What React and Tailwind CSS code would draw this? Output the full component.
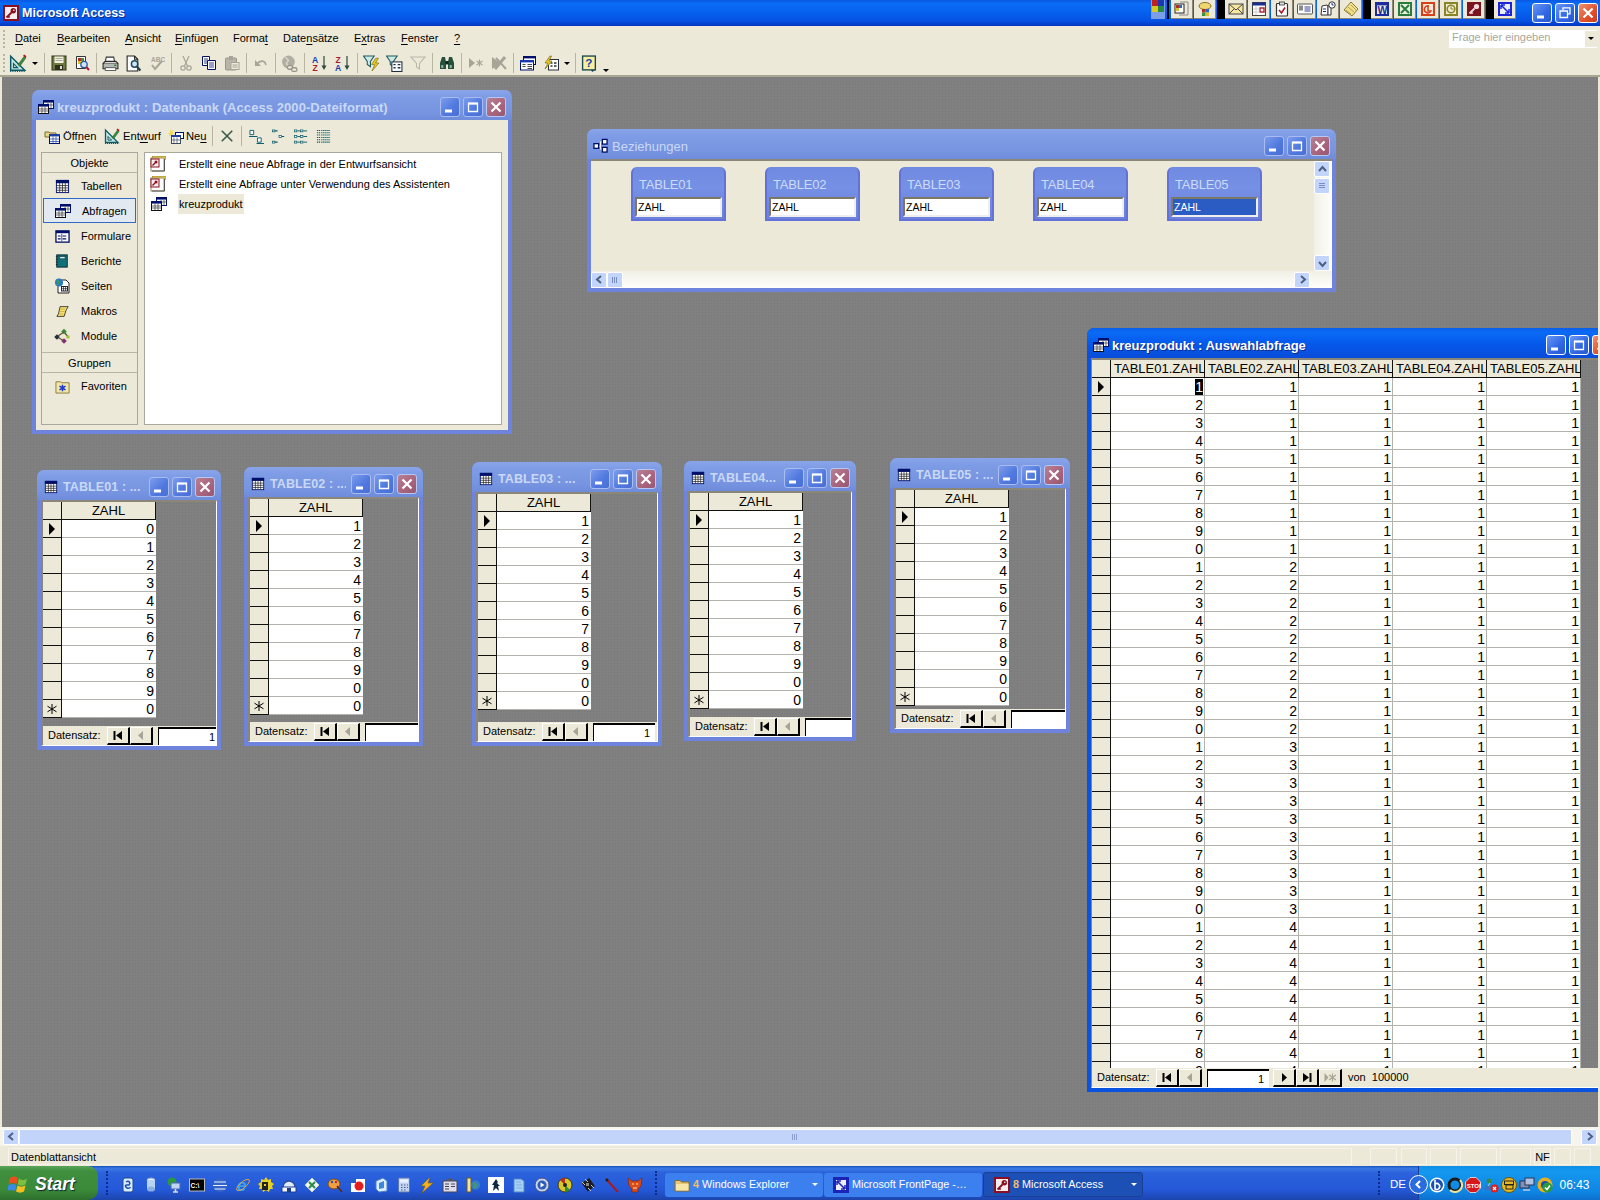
import React from "react";

const S = ({ s = 16, children, className = "" }) => (
  <svg width={s} height={s} viewBox="0 0 16 16" className={`shrink-0 ${className}`} fontFamily="Liberation Sans, sans-serif">
    {children}
  </svg>
);

const I = {
  access: (s) => (
    <S s={s}>
      <rect x="1" y="1" width="14" height="14" fill="#f6eeee" stroke="#8a1020" strokeWidth="2" />
      <circle cx="10.3" cy="5.7" r="2.7" fill="#8a1020" />
      <circle cx="10.8" cy="5.2" r="0.8" fill="#fff" />
      <path d="M8.5 7.5L3.5 12.5M5 11l1.6 1.6" stroke="#8a1020" strokeWidth="1.8" fill="none" />
    </S>
  ),
  table: (s) => (
    <S s={s}>
      <rect x="1.5" y="1.5" width="13" height="13" fill="#fff" stroke="#00106a" />
      <rect x="1" y="1" width="14" height="3.5" fill="#00106a" />
      <path d="M5 4v10M8 4v10M11 4v10M2 7h12M2 9.5h12M2 12h12" stroke="#222" strokeWidth="0.8" />
    </S>
  ),
  query: (s) => (
    <S s={s}>
      <rect x="5.5" y="1.5" width="10" height="8" fill="#fff" stroke="#00106a" />
      <rect x="5" y="1" width="11" height="2.6" fill="#00106a" />
      <path d="M10 4v5M13 4v5M6 6h9" stroke="#333" strokeWidth="0.7" />
      <rect x="0.5" y="5.5" width="10" height="9" fill="#fff" stroke="#111" />
      <rect x="0" y="5" width="11" height="2.6" fill="#00106a" />
      <path d="M4 8v6M7 8v6M1 10h9M1 12h9" stroke="#333" strokeWidth="0.7" />
    </S>
  ),
  rel: (s) => (
    <S s={s}>
      <path d="M5 9h3V4h3M8 9v3h3" stroke="#fff" fill="none" />
      <rect x="1" y="6" width="5" height="5" fill="#fff" stroke="#00106a" strokeWidth="1.4" />
      <rect x="10" y="1.5" width="5" height="5" fill="#fff" stroke="#00106a" strokeWidth="1.4" />
      <rect x="10" y="10" width="5" height="5" fill="#fff" stroke="#00106a" strokeWidth="1.4" />
    </S>
  ),
  design: (s) => (
    <S s={s}>
      <path d="M1.5 2v12.5H14z" fill="#bfe5e5" stroke="#0d5a66" strokeWidth="1.3" />
      <path d="M4 8.5v3.6h3.6z" fill="#ece9d8" stroke="#0d5a66" />
      <path d="M1 15.5h14" stroke="#0d5a66" strokeWidth="1.2" strokeDasharray="1 1" />
      <path d="M8 9.5L13.5 2l1.6 1.4L9.5 11z" fill="#3c8c3c" stroke="#1c5a1c" strokeWidth="0.5" />
      <path d="M13 1l2 1.6" stroke="#b01818" strokeWidth="1.6" />
    </S>
  ),
  save: (s) => (
    <S s={s}>
      <rect x="1" y="1" width="14" height="14" fill="#6e7a3c" stroke="#30351a" />
      <rect x="3.5" y="1.5" width="9" height="6.5" fill="#f0efe0" />
      <path d="M4.5 3.5h7M4.5 5.5h7" stroke="#8a8a70" strokeWidth="0.7" />
      <rect x="4" y="10" width="8" height="5" fill="#2c3018" />
      <rect x="9" y="11" width="2" height="3" fill="#ddd" />
    </S>
  ),
  dbq: (s) => (
    <S s={s}>
      <path d="M2.5 1.5h9v12h-9z" fill="#fff" stroke="#333" />
      <rect x="4" y="3" width="3" height="3" fill="#b03020" />
      <rect x="7" y="3" width="3" height="3" fill="#3c9040" />
      <rect x="4" y="6" width="3" height="3" fill="#d8c030" />
      <circle cx="10" cy="9.5" r="3.2" fill="#cfe4f8" stroke="#2c5aa0" strokeWidth="1.3" />
      <path d="M12.3 12l2.7 3" stroke="#b01840" strokeWidth="2" />
    </S>
  ),
  print: (s) => (
    <S s={s}>
      <path d="M4 2h7l1 5H3z" fill="#fff" stroke="#333" />
      <path d="M1 8h14v5H1z" fill="#b4b8b4" stroke="#2a2a2a" />
      <path d="M1 8l2-2h10l2 2" fill="#d8d8d0" stroke="#2a2a2a" />
      <rect x="3" y="12" width="10" height="2.5" fill="#fff" stroke="#333" strokeWidth="0.7" />
      <rect x="11.5" y="9" width="2" height="1.4" fill="#2a7a2a" />
    </S>
  ),
  preview: (s) => (
    <S s={s}>
      <path d="M2 1h7l3 3v11H2z" fill="#fff" stroke="#222" />
      <path d="M9 1v3h3" fill="none" stroke="#222" />
      <circle cx="9" cy="8.5" r="3" fill="#cfe4f8" stroke="#1e4e5c" strokeWidth="1.4" />
      <path d="M11.3 11l3.2 3.6" stroke="#203c48" strokeWidth="2" />
    </S>
  ),
  spell: (s) => (
    <S s={s}>
      <text x="2" y="6.5" fontSize="6.5" fill="#a6a497" fontWeight="700">ABC</text>
      <path d="M3 10l3 4 7-8" fill="none" stroke="#a6a497" strokeWidth="2" />
    </S>
  ),
  cut: (s) => (
    <S s={s}>
      <path d="M5 1l4.5 10M11 1L6.5 11" stroke="#a6a497" strokeWidth="1.2" fill="none" />
      <circle cx="5" cy="13" r="2.2" fill="none" stroke="#a6a497" strokeWidth="1.2" />
      <circle cx="11" cy="13" r="2.2" fill="none" stroke="#a6a497" strokeWidth="1.2" />
    </S>
  ),
  copy: (s) => (
    <S s={s}>
      <path d="M1.5 1.5h7v9h-7z" fill="#fff" stroke="#00106a" />
      <path d="M3 4h4M3 6h4M3 8h4" stroke="#00106a" strokeWidth="0.8" />
      <path d="M6.5 5.5h8v9h-8z" fill="#fff" stroke="#00106a" />
      <path d="M8 8h5M8 10h5M8 12h5" stroke="#00106a" strokeWidth="0.8" />
    </S>
  ),
  paste: (s) => (
    <S s={s}>
      <rect x="1.5" y="3" width="11" height="12" rx="1" fill="#b7b5a8" stroke="#999788" />
      <rect x="5" y="1" width="4" height="4" fill="#a6a497" />
      <rect x="7" y="7.5" width="8" height="7" fill="#ece9d8" stroke="#a6a497" />
      <path d="M8.5 10h5M8.5 12h5" stroke="#a6a497" />
    </S>
  ),
  undo: (s) => (
    <S s={s}>
      <path d="M4 9c3-4 8-4 9 1" fill="none" stroke="#a6a497" strokeWidth="1.6" />
      <path d="M2 5v6h6z" fill="#a6a497" />
    </S>
  ),
  web: (s) => (
    <S s={s}>
      <circle cx="7" cy="6.5" r="6" fill="#b0aea2" />
      <path d="M4 2l3 3-2 3 2 3" stroke="#d8d6c8" fill="none" strokeWidth="1.4" />
      <rect x="6" y="10" width="5" height="3.4" rx="1.6" fill="#ece9d8" stroke="#96948a" strokeWidth="1.2" />
      <rect x="10" y="12" width="5" height="3.4" rx="1.6" fill="#ece9d8" stroke="#96948a" strokeWidth="1.2" />
    </S>
  ),
  az: (s) => (
    <S s={s}>
      <text x="0" y="7.5" fontSize="8.5" fontWeight="700" fill="#1838b0">A</text>
      <text x="0.5" y="15.5" fontSize="8.5" fontWeight="700" fill="#a81c2c">Z</text>
      <path d="M12 1v11" stroke="#2e4a3c" strokeWidth="1.2" />
      <path d="M9.5 10.5h5L12 15z" fill="#2e4a3c" />
    </S>
  ),
  za: (s) => (
    <S s={s}>
      <text x="0.5" y="7.5" fontSize="8.5" fontWeight="700" fill="#a81c2c">Z</text>
      <text x="0" y="15.5" fontSize="8.5" fontWeight="700" fill="#1838b0">A</text>
      <path d="M12 1v11" stroke="#2e4a3c" strokeWidth="1.2" />
      <path d="M9.5 10.5h5L12 15z" fill="#2e4a3c" />
    </S>
  ),
  filterA: (s) => (
    <S s={s}>
      <path d="M0.5 1h10L7 6v5L4 9V6z" fill="#cfe8e4" stroke="#1c5a60" />
      <path d="M12 3l-4 6h3l-2.5 6L15 7.5h-3.2L14.5 3z" fill="#e8c820" stroke="#7a6a10" strokeWidth="0.6" />
    </S>
  ),
  filterB: (s) => (
    <S s={s}>
      <path d="M0.5 1h10L7 6v5L4 9V6z" fill="#cfe8e4" stroke="#1c5a60" />
      <rect x="5.5" y="6.5" width="9.5" height="9" fill="#fff" stroke="#1c3040" />
      <path d="M7 9h2M11 9h2.5M7 12h2M11 12h2.5" stroke="#1c3040" strokeWidth="1.2" />
    </S>
  ),
  filterC: (s) => (
    <S s={s}>
      <path d="M1 2h14L9.5 8.5V14l-3-2V8.5z" fill="none" stroke="#bab8aa" strokeWidth="1.1" />
    </S>
  ),
  bino: (s) => (
    <S s={s}>
      <path d="M3 2h3l1 5v7H1V8z" fill="#24503c" />
      <path d="M10 2h3l2 6v6H9V7z" fill="#24503c" />
      <rect x="6.5" y="6" width="3" height="3.4" fill="#0e2a1e" />
      <rect x="2.2" y="10" width="2.2" height="3" fill="#8ab0a0" />
      <rect x="10.6" y="10" width="2.2" height="3" fill="#8ab0a0" />
    </S>
  ),
  newRec: (s) => (
    <S s={s}>
      <path d="M1 3l6 5-6 5z" fill="#a6a497" />
      <path d="M11.5 4.5v7M8.5 6l6 4M14.5 6l-6 4" stroke="#a6a497" strokeWidth="1.1" />
    </S>
  ),
  delRec: (s) => (
    <S s={s}>
      <path d="M1 2l8 6-8 6z" fill="#a6a497" />
      <path d="M4 14L14 2" stroke="#a6a497" strokeWidth="3" />
      <path d="M5 3l10 11" stroke="#a6a497" strokeWidth="2" />
    </S>
  ),
  win: (s) => (
    <S s={s}>
      <rect x="3.5" y="1.5" width="12" height="8" fill="#fff" stroke="#00106a" />
      <rect x="3" y="1" width="13" height="2.4" fill="#00106a" />
      <rect x="0.5" y="5.5" width="13" height="9.5" fill="#fff" stroke="#00106a" />
      <rect x="0" y="5" width="14" height="2.4" fill="#1838b0" />
      <path d="M2.5 9.5h3M2.5 11.5h3M7.5 9.5h4.5M7.5 11.5h4.5M7.5 13.5h4.5" stroke="#333" strokeWidth="0.9" />
    </S>
  ),
  newObj: (s) => (
    <S s={s}>
      <rect x="5.5" y="4.5" width="10" height="10.5" fill="#fff" stroke="#26303c" />
      <path d="M7.5 8h2M11 8h2.5M7.5 11h2M11 11h2.5" stroke="#26303c" strokeWidth="1.3" />
      <path d="M7 1L2 8h3l-3 6 7-8H6l2.5-5z" fill="#e8c820" stroke="#6a5c10" strokeWidth="0.6" />
    </S>
  ),
  help: (s) => (
    <S s={s}>
      <rect x="1.5" y="1" width="12" height="13" fill="#f6f0a0" stroke="#1c4a50" strokeWidth="1.3" />
      <path d="M13.5 14l-3 2-1-2z" fill="#1c4a50" />
      <text x="4" y="11.5" fontSize="11" fontWeight="700" fill="#1838b0">?</text>
    </S>
  ),
  open: (s) => (
    <S s={s}>
      <path d="M1 4h4l1 1h6v4H1z" fill="#e8d688" stroke="#7c6c24" />
      <rect x="5.5" y="6.5" width="10" height="9" fill="#fff" stroke="#00106a" />
      <rect x="5" y="6" width="11" height="2.4" fill="#1c3fa8" />
      <path d="M9 8.5v7M12 8.5v7M6 11h9M6 13.5h9" stroke="#1c3fa8" strokeWidth="0.7" />
    </S>
  ),
  neu: (s) => (
    <S s={s}>
      <path d="M2 1l1.4 2.2L5.5 2 4.3 4.4l2.2 1-2.3.7.6 2.4-1.8-1.6L1 8.5l.5-2.4L0 5.4l2.3-.9z" fill="#f0d840" />
      <rect x="7.5" y="4.5" width="8" height="6" fill="#fff" stroke="#00106a" />
      <rect x="3.5" y="7.5" width="9" height="8" fill="#fff" stroke="#3c4a5a" />
      <rect x="3" y="7" width="10" height="2" fill="#1c3fa8" />
      <path d="M6 9.5v6M9 9.5v6M4 12h8" stroke="#3c4a5a" strokeWidth="0.7" />
    </S>
  ),
  x: (s) => (
    <S s={s}>
      <path d="M2 2l12 12M14 2L2 14" stroke="#38584c" strokeWidth="1.8" />
    </S>
  ),
  vLarge: (s) => (
    <S s={s}>
      <path d="M1 1.5h4V6H1z" fill="#fff" stroke="#0f5e6c" />
      <path d="M0 8h9" stroke="#0f5e6c" strokeWidth="1.1" />
      <path d="M9 9.5h4V14H9z" fill="#fff" stroke="#0f5e6c" />
      <path d="M8 15.5h9" stroke="#0f5e6c" strokeWidth="1.1" />
    </S>
  ),
  vSmall: (s) => (
    <S s={s}>
      <path d="M3 2h3M10 8h3M3 14h3" stroke="#0f5e6c" strokeWidth="1.1" />
      <rect x="0.5" y="1" width="2.5" height="2" fill="#fff" stroke="#0f5e6c" strokeWidth="0.8" />
      <rect x="7.5" y="7" width="2.5" height="2" fill="#fff" stroke="#0f5e6c" strokeWidth="0.8" />
      <rect x="0.5" y="13" width="2.5" height="2" fill="#fff" stroke="#0f5e6c" strokeWidth="0.8" />
    </S>
  ),
  vList: (s) => (
    <S s={s}>
      {[2, 8, 14].map((y) => (
        <g key={y}>
          <rect x="0.5" y={y - 1} width="2.5" height="2" fill="#fff" stroke="#0f5e6c" strokeWidth="0.8" />
          <path d={`M3.5 ${y}h3`} stroke="#0f5e6c" />
          <rect x="7" y={y - 1} width="2.5" height="2" fill="#fff" stroke="#0f5e6c" strokeWidth="0.8" />
          <path d={`M10 ${y}h4`} stroke="#0f5e6c" />
        </g>
      ))}
    </S>
  ),
  vDetail: (s) => (
    <S s={s}>
      <path d="M1 1.5h14M1 4h14M1 6.5h14M1 9h14M1 11.5h14M1 14h14" stroke="#0f5e6c" strokeWidth="1.1" strokeDasharray="1.5 0.7" />
      <path d="M5 1v14" stroke="#ece9d8" />
    </S>
  ),
  qdoc: (s) => (
    <S s={s}>
      <rect x="2.5" y="0.5" width="13" height="3" fill="#f0d840" stroke="#a08a20" strokeWidth="0.7" />
      <rect x="1" y="2" width="13" height="13" fill="#fff" stroke="#a08a60" />
      <rect x="1" y="3" width="8" height="8" fill="#f6eeee" stroke="#8a1020" />
      <circle cx="6" cy="6" r="1.5" fill="#8a1020" />
      <path d="M5 7L2.5 9.5" stroke="#8a1020" strokeWidth="1.4" />
      <path d="M14.5 3v12H2" stroke="#555" fill="none" />
    </S>
  ),
  forms: (s) => (
    <S s={s}>
      <rect x="1" y="2" width="14" height="12" fill="#fff" stroke="#00106a" strokeWidth="1.4" />
      <rect x="1" y="2" width="14" height="2.5" fill="#00106a" />
      <path d="M3 7.5h3M3 10.5h3M8 7.5h4M8 10.5h4" stroke="#00106a" strokeWidth="1.2" />
      <path d="M7.2 5v8" stroke="#00106a" strokeWidth="0.7" />
    </S>
  ),
  book: (s) => (
    <S s={s}>
      <rect x="2" y="1" width="12" height="14" fill="#107078" stroke="#00202a" />
      <rect x="5.5" y="3" width="6" height="2.5" fill="#d8eef0" stroke="#002a30" strokeWidth="0.6" />
      <path d="M1 3h2M1 6h2M1 9h2M1 12h2" stroke="#222" strokeWidth="1.1" />
    </S>
  ),
  pages: (s) => (
    <S s={s}>
      <path d="M4 2h8l3 3v10H4z" fill="#fff" stroke="#222" />
      <circle cx="5" cy="4.5" r="4" fill="#2a7ac0" />
      <path d="M3 2l2 2-2 3" stroke="#3ca040" strokeWidth="1.6" fill="none" />
      <rect x="7.5" y="8.5" width="6" height="4.5" fill="#fff" stroke="#222" />
      <path d="M9.5 8.5v4.5M11.5 8.5v4.5M7.5 10.7h6" stroke="#222" strokeWidth="0.7" />
    </S>
  ),
  macro: (s) => (
    <S s={s}>
      <path d="M5 2h10l-2.5 4L10 14H1l2-3z" fill="#f6e070" stroke="#222" />
      <path d="M5 5h6M4.5 8h6M4 11h5" stroke="#c0a828" strokeWidth="0.9" />
    </S>
  ),
  module: (s) => (
    <S s={s}>
      <rect x="1" y="7" width="4" height="4" fill="#2c2c40" transform="rotate(45 3 9)" />
      <rect x="8" y="1.5" width="4" height="4" fill="#3c8c3c" transform="rotate(45 10 3.5)" />
      <rect x="8" y="11" width="4" height="4" fill="#8a2c7c" transform="rotate(45 10 13)" />
      <path d="M4 8l6-4M5 10l5 3M11 5l3 4" stroke="#5a5a30" strokeWidth="1.3" />
      <rect x="12.5" y="7.5" width="3" height="3" fill="#a8c030" />
    </S>
  ),
  fav: (s) => (
    <S s={s}>
      <path d="M1 3h5l1 1h8v11H1z" fill="#f2e6a8" stroke="#8a7a3c" />
      <path d="M8 6v7M4.8 7.5l6.4 4M11.2 7.5l-6.4 4" stroke="#1838d0" strokeWidth="1.6" />
    </S>
  ),
  folder: (s) => (
    <S s={s}>
      <path d="M1 3.5h5l1.5 1.5H15v9H1z" fill="#e6c870" stroke="#8a6c28" />
      <path d="M2 7h12.5v6.5H2z" fill="#f6e6a8" />
    </S>
  ),
  frontpage: (s) => (
    <S s={s}>
      <rect x="0" y="0" width="16" height="16" fill="#1c24b8" />
      <rect x="3" y="3" width="10" height="10" fill="#eef" />
      <path d="M4 4l7 7M4 4h4M4 4v4M12 12H8M12 12V8" stroke="#1c24b8" strokeWidth="1.5" fill="none" />
    </S>
  ),
};

const O = [
  <S key="0"><rect x="1" y="3" width="9" height="9" fill="#fff" stroke="#222" /><rect x="2" y="4" width="3" height="3" fill="#b03020" /><rect x="5" y="4" width="3" height="3" fill="#2a6ac0" /><rect x="2" y="7" width="3" height="3" fill="#d8c030" /><path d="M6 1h8v13H5" fill="none" stroke="#888" /></S>,
  <S key="1"><ellipse cx="8" cy="5" rx="6" ry="3.5" fill="#f0d870" stroke="#8a7030" /><rect x="5" y="8" width="3.5" height="3.5" fill="#b03020" /><rect x="8.5" y="8" width="3.5" height="3.5" fill="#2a6ac0" /><rect x="5" y="11.5" width="3.5" height="3.5" fill="#3c9040" /><rect x="8.5" y="11.5" width="3.5" height="3.5" fill="#d8c030" /></S>,
  <S key="2"><rect x="1" y="3" width="14" height="10" fill="#f6e8a0" stroke="#444" /><path d="M1 3l7 6 7-6M1 13l5-5M15 13l-5-5" fill="none" stroke="#444" /></S>,
  <S key="3"><rect x="1.5" y="1.5" width="13" height="13" fill="#fff" stroke="#444" /><rect x="1.5" y="1.5" width="13" height="3" fill="#1c2c8c" /><rect x="9" y="7" width="4" height="4" fill="none" stroke="#a81c2c" strokeWidth="1.4" /><path d="M5 5v9M2 8h7M2 11h7" stroke="#bbb" strokeWidth="0.7" /></S>,
  <S key="4"><rect x="2.5" y="2.5" width="11" height="12.5" rx="1" fill="#fff" stroke="#333" strokeWidth="1.2" /><rect x="5.5" y="1" width="5" height="3" fill="#ddd" stroke="#333" strokeWidth="0.8" /><path d="M5 9l2.5 3L11 6.5" fill="none" stroke="#a81c2c" strokeWidth="1.6" /></S>,
  <S key="5"><rect x="0.5" y="3" width="15" height="10" rx="1" fill="#fff" stroke="#555" /><rect x="2" y="4.5" width="4" height="5" fill="#888" /><path d="M7.5 6h6M7.5 8h6M7.5 10h6" stroke="#1c2c8c" strokeWidth="0.9" /></S>,
  <S key="6"><path d="M2 5l5-1 1 1v9H1z" fill="#fff" stroke="#333" /><path d="M8 5l3-1v10H8z" fill="#fff" stroke="#333" /><circle cx="12" cy="4" r="3.2" fill="#fff" stroke="#333" /><path d="M12 2v2h1.6M3 8h3M3 10.5h3" stroke="#1c2c8c" fill="none" /></S>,
  <S key="7"><path d="M8 1l7 7-6 7-8-6z" fill="#f2e08c" stroke="#8a7a3c" /><path d="M5 6l6 5M8 4l5 5M3 9l5 4" stroke="#a89030" strokeWidth="0.8" /></S>,
  <S key="8"><rect x="1" y="1" width="14" height="14" fill="#1c2c9c" /><rect x="3" y="3" width="10" height="10" fill="#f4f0e4" /><text x="3.4" y="12.5" fontSize="10.5" fontWeight="700" fill="#1c2c9c">W</text><rect x="3" y="3" width="10" height="1.4" fill="#1c2c9c" /></S>,
  <S key="9"><rect x="1" y="1" width="14" height="14" fill="#2a7a3c" /><rect x="3" y="3" width="10" height="10" fill="#e8f0dc" /><path d="M4 4l8 8M12 4l-8 8" stroke="#2a7a3c" strokeWidth="2" /></S>,
  <S key="10"><rect x="1" y="1" width="14" height="14" fill="#d8401c" /><rect x="3" y="3" width="10" height="10" fill="#f4ead8" /><path d="M9 5a3.5 3.5 0 1 0 2 5H8V5z" fill="none" stroke="#d8401c" strokeWidth="1.5" /></S>,
  <S key="11"><rect x="1" y="1" width="14" height="14" fill="#8a8428" /><rect x="3" y="3" width="10" height="10" fill="#f0ecd0" /><circle cx="8" cy="8" r="3.8" fill="none" stroke="#8a8428" strokeWidth="1.6" /><path d="M8 5.5V8h2.5" stroke="#8a8428" fill="none" /></S>,
  <S key="12"><rect x="1" y="1" width="14" height="14" fill="#7c1420" /><circle cx="10.5" cy="5.5" r="2.6" fill="#f4dcdc" /><path d="M8.5 7.5l-5 5M5 11l1.6 1.6" stroke="#f4dcdc" strokeWidth="1.8" /></S>,
  <S key="13"><rect x="1" y="1" width="14" height="14" fill="#1c24d8" /><rect x="3" y="3" width="10" height="10" fill="#e8eeff" /><path d="M4 4l7 7M4 4h4M4 4v4M12 12H8M12 12V8" stroke="#1c24d8" strokeWidth="1.5" fill="none" /></S>,
];

const Q = [
  <S key="a"><rect x="3" y="1" width="10" height="14" rx="2" fill="#d8ecff" stroke="#204890" /><path d="M6 5c3-2 5 1 3 3H5.5M5.5 8c0 4 4 4 5 2" stroke="#1c50b0" strokeWidth="1.5" fill="none" /></S>,
  <S key="b"><ellipse cx="8" cy="3" rx="4" ry="2" fill="#e8f2ff" stroke="#8aa0c8" /><rect x="4" y="3" width="8" height="9" fill="#b8d4f4" /><ellipse cx="8" cy="12" rx="4" ry="2.6" fill="#8ab0e4" /></S>,
  <S key="c"><circle cx="6" cy="5" r="4.5" fill="#2a9a3c" /><rect x="5" y="6" width="9" height="6" fill="#bcd4f8" stroke="#4a6aa8" /><path d="M7 15h5M9.5 12v3" stroke="#dde" strokeWidth="1.6" /></S>,
  <S key="d"><rect x="0.5" y="2" width="15" height="12" fill="#000" stroke="#bbb" /><text x="1.6" y="10.5" fontSize="6.5" fontWeight="700" fill="#fff">C:\</text></S>,
  <S key="e"><circle cx="8" cy="8" r="7" fill="#3464c8" /><path d="M2 5h12M1 8.5h14M2.5 12h11" stroke="#e8f0ff" strokeWidth="1.2" /></S>,
  <S key="f"><text x="2" y="14" fontSize="17" fontWeight="700" fontStyle="italic" fill="#3aa0f0">e</text><ellipse cx="8" cy="8" rx="8" ry="3" fill="none" stroke="#f0b030" strokeWidth="0.8" transform="rotate(-40 8 8)" /></S>,
  <S key="g"><path d="M8 0l2 3 3-1 0 3 3 2-2 2 1 3-3 0-1 3-3-2-3 2-1-3-3 0 1-3-2-2 3-2 0-3 3 1z" fill="#e8d020" /><rect x="4" y="5" width="6" height="8" fill="#222" /><rect x="6" y="7" width="2" height="2" fill="#e8d020" /></S>,
  <S key="h"><path d="M2 10a6 6 0 0 1 12 0" fill="#dcecff" stroke="#304c9c" strokeWidth="1.5" /><rect x="1" y="10" width="14" height="5" fill="#f4f8ff" stroke="#1c3c8c" /><rect x="6" y="11" width="4" height="4" fill="#1c3c8c" /></S>,
  <S key="i"><path d="M8 1l7 7-7 7-7-7z" fill="#f0f6f0" stroke="#c0d0c0" /><path d="M5 5l6 6M11 5l-6 6" stroke="#2a8a4c" strokeWidth="2" /></S>,
  <S key="j"><ellipse cx="7" cy="7" rx="6" ry="5" fill="#f0a040" stroke="#7a4a10" /><circle cx="5" cy="5" r="1.2" fill="#2858c0" /><circle cx="9" cy="5" r="1.2" fill="#c02828" /><path d="M10 9l5 6" stroke="#5a2a10" strokeWidth="1.6" /></S>,
  <S key="k"><rect x="1" y="2" width="14" height="13" fill="#fff" /><circle cx="9" cy="9" r="4.5" fill="#e81c1c" /><rect x="1" y="1" width="5" height="5" fill="#2860c8" /></S>,
  <S key="l"><path d="M3 4l7-3 4 3v10l-8 1-3-3z" fill="#dceeff" stroke="#4c80c8" /><path d="M6 6l5-2v7l-5 1z" fill="#3c88d8" /></S>,
  <S key="m"><rect x="2.5" y="1" width="11" height="14" rx="1" fill="#c4d4f0" stroke="#5c76a8" /><rect x="4" y="2.5" width="8" height="3" fill="#e8f2ff" /><path d="M5 8h1.5M8 8h1.5M11 8h1M5 10.5h1.5M8 10.5h1.5M11 10.5h1M5 13h1.5M8 13h1.5" stroke="#445a88" strokeWidth="1.1" /></S>,
  <S key="n"><path d="M11 0L2 9h4l-3 7 11-10H9z" fill="#f0b020" stroke="#806010" strokeWidth="0.6" /></S>,
  <S key="o"><rect x="1" y="4" width="14" height="11" fill="#dde" stroke="#445" /><path d="M3 7h4M3 9.5h4M9 7h4M9 9.5h4M3 12h4" stroke="#445" /><path d="M2 4l6-3 6 3z" fill="#556" /></S>,
  <S key="p"><rect x="2" y="1" width="4" height="14" fill="#f2e4a0" stroke="#6a5a20" /><circle cx="10.5" cy="8" r="4.5" fill="#3a80c0" /><path d="M8 6l3 2-2 3" stroke="#4aa050" strokeWidth="1.5" fill="none" /></S>,
  <S key="q"><rect x="0" y="0" width="16" height="16" fill="#fff" /><path d="M8 2l2 3-1 1 3 3-2 0 1 5-3-3-3 3 1-6-2 0z" fill="#0c2a40" /></S>,
  <S key="r"><path d="M3 2h7l3 2v11H3z" fill="#a8d0f4" stroke="#5088c8" /><path d="M5 5h5M5 8h6M5 11h6" stroke="#7cb0e4" /></S>,
  <S key="s"><circle cx="8" cy="8" r="7" fill="#c8d4ec" stroke="#40507c" /><circle cx="8" cy="8" r="4.5" fill="#2c5cb8" /><path d="M6.5 5.5l4 2.5-4 2.5z" fill="#fff" /></S>,
  <S key="t"><circle cx="8" cy="8" r="7" fill="#d8c828" stroke="#403810" /><path d="M8 8L3 3a7 7 0 0 1 5-2z" fill="#b83020" /><path d="M8 8l5 5a7 7 0 0 1-5 2z" fill="#2c8c3c" /><circle cx="8" cy="8" r="2" fill="#222" /></S>,
  <S key="u"><rect x="4" y="3" width="9" height="10" transform="rotate(-35 8 8)" fill="#1c1c1c" /><path d="M2 5l3 3M5 2l3 3M8 11l3 3M11 8l3 3" stroke="#ccc" /><rect x="6" y="6" width="3" height="3" fill="#888" /></S>,
  <S key="v"><path d="M2 2l12 13" stroke="#a81c1c" strokeWidth="2" /><path d="M2 2l2 2" stroke="#222" strokeWidth="2.5" /></S>,
  <S key="w"><path d="M1 1l4 3h6l4-3-1 8-3 3v3H5v-3L2 9z" fill="#d84c1c" stroke="#7a2008" strokeWidth="0.6" /><path d="M5 7h2M9 7h2M6 11h4" stroke="#ffe0a0" strokeWidth="1.2" /></S>,
];

const Tray = [
  <S key="1"><circle cx="8" cy="8" r="7.5" fill="#fff" /><circle cx="8" cy="8" r="6" fill="#1c50b0" /><path d="M6 3v9.5M6 7a3 3 0 1 1 0 5" fill="none" stroke="#fff" strokeWidth="1.6" /></S>,
  <S key="2"><circle cx="8" cy="8" r="6" fill="none" stroke="#1a1a1a" strokeWidth="3" /><path d="M3 13a7 7 0 0 0 10-10" fill="none" stroke="#e8e4a0" strokeWidth="2" /></S>,
  <S key="3"><path d="M5 0.5h6L15.5 5v6L11 15.5H5L0.5 11V5z" fill="#d81818" stroke="#fff" strokeWidth="0.7" /><text x="1.7" y="10.5" fontSize="6" fontWeight="700" fill="#fff">STOP</text></S>,
  <S key="4"><circle cx="6" cy="4" r="2.5" fill="#3a8a3c" /><circle cx="4" cy="11" r="2.5" fill="#3a70c0" /><path d="M7 6l-2 3" stroke="#ccc" /><circle cx="11.5" cy="11.5" r="4" fill="#e01c1c" /><path d="M10 10l3 3M13 10l-3 3" stroke="#fff" strokeWidth="1.2" /></S>,
  <S key="5"><circle cx="8" cy="8" r="7.5" fill="#e8b820" stroke="#6a5410" /><rect x="3.5" y="4" width="9" height="3.5" fill="none" stroke="#222" /><rect x="5" y="8" width="7" height="4" fill="none" stroke="#222" /></S>,
  <S key="6"><rect x="1" y="4" width="9" height="7" fill="#8090b8" stroke="#2c3454" /><rect x="6" y="1" width="9" height="7" fill="#b0c0e0" stroke="#2c3454" /><path d="M4 13h7" stroke="#c0c8d8" strokeWidth="1.5" /></S>,
  <S key="7"><circle cx="8" cy="8" r="7.5" fill="#e8b020" /><circle cx="8" cy="8" r="4" fill="#1c4ab0" /><circle cx="10.5" cy="10.5" r="5" fill="#2a9a3c" /><path d="M8 10.5l2 2 3-4" stroke="#fff" strokeWidth="1.5" fill="none" /></S>,
];

const Sep = ({ w = "w-[6px]" }) => (
  <div className={`${w} h-[20px] flex justify-center shrink-0`}>
    <div className="w-px h-full bg-[#b8b5a2]" />
  </div>
);
const Btn = ({ children }) => <div className="w-[23px] h-[24px] flex items-center justify-center shrink-0">{children}</div>;
const Drop = ({ w = "w-[12px]" }) => (
  <div className={`${w} h-[24px] flex items-center justify-center shrink-0`}>
    <div className="w-0 h-0 border-x-[3px] border-t-[3px] border-x-transparent border-t-black" />
  </div>
);

const U = ({ children }) => <span className="underline underline-offset-2 decoration-1">{children}</span>;

const WinBtn = ({ kind, active }) => {
  const bg =
    kind === "close"
      ? active
        ? "bg-[linear-gradient(135deg,#f09070,#e0502c_60%,#c83c1c)] border-white"
        : "bg-[linear-gradient(135deg,#b88094,#a8647c_60%,#965870)] border-[#b8c8f0]"
      : active
        ? "bg-[linear-gradient(135deg,#6a96f4,#2f66e4_60%,#2a58cc)] border-white"
        : "bg-[linear-gradient(135deg,#7c9cec,#4f78de_60%,#4a6fd4)] border-[#a8bcf0]";
  return (
    <div className={`w-[20px] h-[20px] ${bg} border rounded-[3px] flex items-center justify-center shrink-0`}>
      <svg width="14" height="14" viewBox="0 0 14 14">
        {kind === "min" && <rect x="2" y="9.5" width="7" height="3" fill="#fff" />}
        {kind === "max" && <path d="M2.5 3.5h9v8h-9z" fill="none" stroke="#fff" strokeWidth="1.3" />}
        {kind === "max" && <rect x="2" y="2.5" width="10" height="2" fill="#fff" />}
        {kind === "restore" && <path d="M5 4V1.8h7v6H10M2 5h7.5v6.5H2z" fill="none" stroke="#fff" strokeWidth="1.3" />}
        {kind === "close" && <path d="M2.5 2.5l9 9M11.5 2.5l-9 9" stroke="#fff" strokeWidth="2.2" />}
      </svg>
    </div>
  );
};

const Title = ({ icon, title, active, pad = "pl-[6px] gap-[3px]", text = "text-[13px] font-bold" }) => (
  <div
    className={`h-[30px] shrink-0 -mx-[4px] pt-[3px] pr-[6px] ${pad} flex items-center rounded-t-[7px] ${
      active
        ? "bg-[linear-gradient(180deg,#0b5fe8,#0a6af6_15%,#0558ea_55%,#0a4cd8)] text-white [text-shadow:1px_1px_0_#0a2a90]"
        : "bg-[linear-gradient(180deg,#8aa4ea,#7f9de6_20%,#7795e0_70%,#6f8cdc)] text-[#c9d8f6]"
    }`}
  >
    {icon}
    <div className={`flex-1 min-w-0 pt-[2px] whitespace-nowrap overflow-hidden ${text}`}>{title}</div>
    <div className="flex gap-[3px] shrink-0">
      <WinBtn kind="min" active={active} />
      <WinBtn kind="max" active={active} />
      <WinBtn kind="close" active={active} />
    </div>
  </div>
);

const DESK = "bg-[#808080] bg-[radial-gradient(#787878_0.7px,transparent_0.8px)] bg-[size:3px_3px]";

const NavBtn = ({ children }) => (
  <div className="w-[23px] h-[18px] bg-[#ece9d8] border-t border-l border-t-white border-l-white border-r-2 border-b-2 border-r-black border-b-black flex items-center justify-center shrink-0">
    <svg width="12" height="11" viewBox="0 0 12 11">{children}</svg>
  </div>
);
const NavFirst = () => <NavBtn><rect x="1.5" y="1" width="2" height="9" fill="#000" /><path d="M10 1v9L4 5.5z" fill="#000" /></NavBtn>;
const NavPrev = () => <NavBtn><path d="M8 1v9L3 5.5z" fill="#a6a497" /></NavBtn>;
const NavNext = () => <NavBtn><path d="M4 1v9l5-4.500z" fill="#000" /></NavBtn>;
const NavLast = () => <NavBtn><path d="M2 1v9l6-4.500z" fill="#000" /><rect x="8.5" y="1" width="2" height="9" fill="#000" /></NavBtn>;
const NavNew = () => <NavBtn><path d="M0.5 1v9l4-4.500z" fill="#a6a497" /><path d="M8.5 1.5v8M5 3l7 5M12 3L5 8" stroke="#a6a497" strokeWidth="1.2" /></NavBtn>;

const Nav = ({ full, value }) => (
  <div className="h-[19px] shrink-0 bg-[#ece9d8] flex items-center overflow-hidden text-[11px] text-black">
    <div className="w-[64px] shrink-0 pl-[5px]">Datensatz:</div>
    <NavFirst />
    <NavPrev />
    <div className="w-[62px] h-[18px] ml-[5px] shrink-0 bg-white border-t-2 border-l border-t-black border-l-black text-right pr-[5px] leading-[17px]">{value && "1"}</div>
    {full && (
      <>
        <div className="w-[4px] shrink-0" />
        <NavNext />
        <NavLast />
        <NavNew />
        <div className="ml-[6px] whitespace-nowrap">von&nbsp; 100000</div>
      </>
    )}
  </div>
);

const RowHead = ({ mark }) => (
  <div className="h-[18px] bg-[#ece9d8] border-r border-b border-r-[#111] border-b-[#111] flex items-center justify-center">
    {mark === "cur" && <div className="w-0 h-0 border-y-[6px] border-l-[6px] border-y-transparent border-l-black" />}
    {mark === "new" && (
      <svg width="10" height="10" viewBox="0 0 10 10">
        <path d="M5 0v10M0.5 2.2l9 5.6M9.5 2.2l-9 5.6" stroke="#000" />
      </svg>
    )}
  </div>
);
const ColHead = ({ children, clip }) => (
  <div className={`h-[18px] bg-[#ece9d8] border-r border-b border-r-[#111] border-b-[#111] text-[13px] leading-[17px] overflow-hidden whitespace-nowrap ${clip ? "pl-[3px]" : "text-center"}`}>
    {children}
  </div>
);
const Cell = ({ children, grid, hl }) => (
  <div className={`h-[18px] bg-white border-b border-b-[#b4b2ac] text-[14px] leading-[18px] text-right ${grid ? "border-r border-r-[#b4b2ac] pr-[1px]" : "pr-[2px]"}`}>
    {hl ? <span className="bg-black text-white">{children}</span> : children}
  </div>
);

const TableWin = ({ pos, name, data, title, value }) => (
  <div className={`absolute ${pos} flex flex-col rounded-t-[7px] px-[4px] pb-[4px] bg-[#6d83dc]`}>
    <Title icon={I.table(14)} title={title} pad="pl-[7px] gap-[5px]" text="text-[12.5px] font-bold tracking-[0.1px]" />
    <div className="flex-1 min-h-0 flex flex-col border-t-2 border-l-2 border-t-[#8a8778] border-l-[#8a8778] border-r border-b border-r-white border-b-white">
      <div className={`flex-1 min-h-0 overflow-hidden ${DESK}`}>
        <div className="grid grid-cols-[19px_94px] w-[113px]">
          <RowHead />
          <ColHead>{name}</ColHead>
          {data.map((v, i) => (
            <React.Fragment key={i}>
              <RowHead mark={i === 0 ? "cur" : i === data.length - 1 ? "new" : undefined} />
              <Cell>{v}</Cell>
            </React.Fragment>
          ))}
        </div>
      </div>
      <Nav value={value} />
    </div>
  </div>
);

const T1D = [0, 1, 2, 3, 4, 5, 6, 7, 8, 9, 0];
const TD = [1, 2, 3, 4, 5, 6, 7, 8, 9, 0, 0];

const rows = Array.from({ length: 39 }, (_, i) => [(i + 1) % 10, Math.floor(i / 10) + 1]);

const SideRow = ({ icon, label, sel }) => (
  <div className={`h-[25px] mx-[1px] flex items-center pt-[1px] ${sel ? "border border-[#316ac5] bg-[#e3e9f0]" : ""}`}>
    <div className="w-[38px] flex justify-center shrink-0">{icon}</div>
    <span className="whitespace-nowrap">{label}</span>
  </div>
);

const Scroll = ({ dir }) => (
  <div className="w-[16px] h-[16px] rounded-[2px] bg-[#c4d5fb] border border-white flex items-center justify-center shrink-0">
    <svg width="9" height="9" viewBox="0 0 9 9">
      <path
        d={{ up: "M1 6l3.5-4L8 6", down: "M1 3l3.5 4L8 3", left: "M6 1L2 4.5 6 8", right: "M3 1l4 3.5L3 8" }[dir]}
        fill="none"
        stroke="#4d6185"
        strokeWidth="2"
      />
    </svg>
  </div>
);

const Card = ({ name, sel }) => (
  <div className="w-[95px] h-[54px] shrink-0 rounded-t-[6px] bg-[linear-gradient(180deg,#6f8ae0,#7590e4_40%,#6d80dc)] border-x-2 border-b-2 border-[#6272d8] flex flex-col">
    <div className="h-[30px] pl-[6px] pt-[5px] flex items-center text-[13px] text-[#cbdcf8] shrink-0 tracking-[-0.2px]">{name}</div>
    <div className={`mx-[2px] h-[20px] border-t-2 border-l-2 border-t-[#7c7866] border-l-[#7c7866] border-r-2 border-b-2 border-r-[#eee] border-b-[#eee] text-[10.5px] leading-[17px] pl-[1px] ${sel ? "bg-[#2a5cc4] text-white" : "bg-white text-black"}`}>
      ZAHL
    </div>
  </div>
);

const StatusP = ({ w, children }) => (
  <div className={`${w} h-[17px] shrink-0 border border-[#f6f4ea] text-center text-[11px] leading-[16px]`}>{children}</div>
);

const Grip = ({ w = "w-[18px]" }) => (
  <div className={`${w} shrink-0 flex justify-center items-center`}>
    <div className="h-[24px] border-l-2 border-dotted border-[#0c2c8c]" />
  </div>
);

export default function App() {
  return (
    <div className="w-[1600px] h-[1200px] flex flex-col overflow-hidden bg-[#ece9d8] font-['Liberation_Sans',Arial,sans-serif] text-black text-[11px]">
      {/* application title bar */}
      <div className="h-[26px] shrink-0 flex items-start bg-[linear-gradient(180deg,#0b58e0,#0a6cf6_14%,#0664f0_40%,#0552e4_80%,#0336c0)]">
        <div className="h-[26px] pl-[3px] flex items-center gap-[3px] text-white font-bold text-[12.5px] [text-shadow:1px_1px_0_#0a2a90]">
          {I.access(16)}
          <span className="pt-[1px]">Microsoft Access</span>
        </div>
        <div className="ml-auto h-[19px] flex items-start">
          <div className="w-[14px] h-[19px] bg-[#7c9ee8] flex items-start justify-center"><svg width="12" height="12" viewBox="0 0 12 12"><rect width="6" height="6" fill="#c02020" /><rect x="6" width="6" height="6" fill="#1c38b0" /><rect y="6" width="6" height="6" fill="#d8c820" /><rect x="6" y="6" width="6" height="6" fill="#2a8a3c" /></svg></div>
          <div className="w-[2px] h-[19px] mx-[2px] bg-black" />
          {O.map((ic, i) => (
            <React.Fragment key={i}>
              {(i === 2 || i === 8 || i === 13) && <div className="w-[8px] h-[19px] bg-black" />}
              <div className="w-[22px] h-[19px] mr-px bg-[#ece9d8] border-b border-r border-[#8a8778] flex items-center justify-center">{ic}</div>
            </React.Fragment>
          ))}
        </div>
        <div className="ml-[15px] mr-[2px] mt-[3px] flex gap-[3px]">
          <WinBtn kind="min" active />
          <WinBtn kind="restore" active />
          <WinBtn kind="close" active />
        </div>
      </div>

      {/* menu bar */}
      <div className="h-[25px] shrink-0 flex items-center text-[11px]">
        <div className="w-[3px] h-[18px] ml-[3px] mr-[9px] border-l-2 border-dotted border-[#b8b5a2]" />
        <div className="w-[42px]"><U>D</U>atei</div>
        <div className="w-[68px]"><U>B</U>earbeiten</div>
        <div className="w-[50px]"><U>A</U>nsicht</div>
        <div className="w-[58px]"><U>E</U>infügen</div>
        <div className="w-[50px]">Forma<U>t</U></div>
        <div className="w-[71px]">Date<U>n</U>sätze</div>
        <div className="w-[47px]">E<U>x</U>tras</div>
        <div className="w-[53px]"><U>F</U>enster</div>
        <div><U>?</U></div>
        <div className="ml-auto mr-[3px] w-[148px] h-[18px] bg-white flex items-center text-[11px] text-[#a8a89c]">
          <span className="pl-[3px] pb-[2px] flex-1 whitespace-nowrap">Frage hier eingeben</span>
          <div className="w-[12px] h-[16px] bg-[#ece9d8] flex items-center justify-center">
            <div className="w-0 h-0 border-x-[3px] border-t-[3px] border-x-transparent border-t-black" />
          </div>
        </div>
      </div>

      {/* toolbar */}
      <div className="h-[26px] shrink-0 flex items-center border-b-2 border-b-[#a8a592]">
        <div className="w-[3px] h-[18px] ml-[3px] mr-[1px] border-l-2 border-dotted border-[#b8b5a2]" />
        <div className="w-[22px] flex justify-center shrink-0">{I.design(18)}</div>
        <Drop />
        <Sep />
        <Btn>{I.save(16)}</Btn>
        <Btn>{I.dbq(16)}</Btn>
        <Sep />
        <Btn>{I.print(17)}</Btn>
        <Btn>{I.preview(17)}</Btn>
        <Btn>{I.spell(16)}</Btn>
        <Sep />
        <Btn>{I.cut(16)}</Btn>
        <Btn>{I.copy(16)}</Btn>
        <Btn>{I.paste(16)}</Btn>
        <Sep />
        <Btn>{I.undo(16)}</Btn>
        <Sep />
        <Btn>{I.web(17)}</Btn>
        <Sep w="w-[7px]" />
        <Btn>{I.az(16)}</Btn>
        <Btn>{I.za(16)}</Btn>
        <Sep />
        <Btn>{I.filterA(17)}</Btn>
        <Btn>{I.filterB(17)}</Btn>
        <Btn>{I.filterC(16)}</Btn>
        <Sep />
        <Btn>{I.bino(16)}</Btn>
        <Sep />
        <Btn>{I.newRec(16)}</Btn>
        <Btn>{I.delRec(16)}</Btn>
        <Sep />
        <Btn>{I.win(16)}</Btn>
        <Btn>{I.newObj(16)}</Btn>
        <Drop w="w-[10px]" />
        <Sep />
        <Btn>{I.help(17)}</Btn>
        <div className="w-[10px] h-[24px] flex items-end justify-center pb-[3px]">
          <div className="w-0 h-0 border-x-[3px] border-t-[3px] border-x-transparent border-t-black" />
        </div>
      </div>

      {/* MDI area */}
      <div className={`relative flex-1 min-h-0 overflow-hidden mx-[2px] ${DESK}`}>
        {/* Database window */}
        <div className="absolute left-[30px] top-[13px] w-[480px] h-[344px] flex flex-col rounded-t-[7px] px-[4px] pb-[4px] bg-[#6d83dc]">
          <Title icon={I.query(16)} title={<span className="tracking-[0.07px]">kreuzprodukt : Datenbank (Access 2000-Dateiformat)</span>} />
          <div className="flex-1 min-h-0 flex flex-col bg-[#ece9d8]">
            <div className="h-[32px] shrink-0 flex items-center pl-[8px] text-[11.2px]">
              <div className="w-[60px] flex items-center gap-[3px] shrink-0">{I.open(16)}<span>Öff<U>n</U>en</span></div>
              <div className="w-[64px] flex items-center gap-[3px] shrink-0">{I.design(16)}<span>Ent<U>w</U>urf</span></div>
              <div className="w-[40px] flex items-center gap-[2px] shrink-0">{I.neu(16)}<span>Ne<U>u</U></span></div>
              <Sep w="w-[8px]" />
              <div className="w-[22px] flex justify-center shrink-0">{I.x(14)}</div>
              <Sep />
              <div className="w-[24px] flex justify-center shrink-0">{I.vLarge(15)}</div>
              <div className="w-[22px] flex justify-center shrink-0">{I.vSmall(15)}</div>
              <div className="w-[22px] flex justify-center shrink-0">{I.vList(15)}</div>
              <div className="w-[22px] flex justify-center shrink-0">{I.vDetail(15)}</div>
            </div>
            <div className="flex-1 min-h-0 flex gap-[6px] pl-[5px] pr-[6px] pb-[5px]">
              <div className="w-[97px] shrink-0 border border-[#a9a89e] text-[11px] flex flex-col">
                <div className="h-[20px] shrink-0 pt-[1px] flex items-center justify-center border-b border-[#b8b6a8]">Objekte</div>
                <SideRow icon={I.table(15)} label="Tabellen" />
                <SideRow icon={I.query(16)} label="Abfragen" sel />
                <SideRow icon={I.forms(15)} label="Formulare" />
                <SideRow icon={I.book(14)} label="Berichte" />
                <SideRow icon={I.pages(16)} label="Seiten" />
                <SideRow icon={I.macro(13)} label="Makros" />
                <SideRow icon={I.module(16)} label="Module" />
                <div className="h-[5px] shrink-0 border-b border-[#b8b6a8]" />
                <div className="h-[20px] shrink-0 pt-[1px] flex items-center justify-center border-b border-[#b8b6a8]">Gruppen</div>
                <SideRow icon={I.fav(15)} label="Favoriten" />
              </div>
              <div className="flex-1 min-w-0 bg-white border border-[#a9a89e] pt-[1px] pl-[3px] text-[11px]">
                {["Erstellt eine neue Abfrage in der Entwurfsansicht", "Erstellt eine Abfrage unter Verwendung des Assistenten"].map((t) => (
                  <div key={t} className="h-[20px] flex items-center">
                    <div className="w-[31px] shrink-0 pl-[2px]">{I.qdoc(16)}</div>
                    <span className="whitespace-nowrap">{t}</span>
                  </div>
                ))}
                <div className="h-[20px] flex items-center">
                  <div className="w-[30px] shrink-0 pl-[3px]">{I.query(16)}</div>
                  <span className="h-[20px] leading-[20px] bg-[#ece9d8] px-[1px] whitespace-nowrap">kreuzprodukt</span>
                </div>
              </div>
            </div>
          </div>
        </div>

        {/* Beziehungen window */}
        <div className="absolute left-[585px] top-[52px] w-[749px] h-[163px] flex flex-col rounded-t-[7px] px-[4px] pb-[4px] bg-[#6d83dc]">
          <Title icon={I.rel(15)} title="Beziehungen" pad="pl-[6px] gap-[4px]" text="text-[13px]" />
          <div className="flex-1 min-h-0 flex flex-col bg-[#ece9d8] border-t-2 border-t-[#8a8778]">
            <div className="flex-1 min-h-0 flex">
              <div className="flex-1 min-w-0 flex gap-[39px] pl-[40px] pt-[6px]">
                <Card name="TABLE01" />
                <Card name="TABLE02" />
                <Card name="TABLE03" />
                <Card name="TABLE04" />
                <Card name="TABLE05" sel />
              </div>
              <div className="w-[18px] shrink-0 bg-[linear-gradient(90deg,#f2f0e6,#fefefb)] flex flex-col">
                <Scroll dir="up" />
                <div className="w-[16px] h-[16px] mt-[1px] rounded-[2px] bg-[#c4d5fb] border border-white flex items-center justify-center">
                  <svg width="8" height="8" viewBox="0 0 8 8"><path d="M1 1.5h6M1 3.5h6M1 5.5h6" stroke="#7a8fc0" /></svg>
                </div>
                <div className="flex-1" />
                <Scroll dir="down" />
              </div>
            </div>
            <div className="h-[17px] shrink-0 flex items-center bg-[linear-gradient(180deg,#f2f0e6,#fefefb)] pr-[22px]">
              <Scroll dir="left" />
              <div className="w-[16px] h-[16px] rounded-[2px] bg-[#c4d5fb] border border-white flex items-center justify-center">
                <svg width="8" height="8" viewBox="0 0 8 8"><path d="M1.5 1v6M3.5 1v6M5.5 1v6" stroke="#7a8fc0" /></svg>
              </div>
              <div className="flex-1" />
              <Scroll dir="right" />
            </div>
          </div>
        </div>

        <TableWin pos="left-[35px] top-[393px] w-[184px] h-[280px]" name="ZAHL" data={T1D} title="TABLE01 : ..." value />
        <TableWin pos="left-[242px] top-[390px] w-[179px] h-[279px]" name="ZAHL" data={TD} title="TABLE02 : ..." />
        <TableWin pos="left-[470px] top-[385px] w-[190px] h-[284px]" name="ZAHL" data={TD} title="TABLE03 : ..." value />
        <TableWin pos="left-[682px] top-[384px] w-[172px] h-[280px]" name="ZAHL" data={TD} title="TABLE04..." />
        <TableWin pos="left-[888px] top-[381px] w-[180px] h-[275px]" name="ZAHL" data={TD} title="TABLE05 : ..." />

        {/* Query window */}
        <div className="absolute left-[1085px] top-[251px] w-[531px] h-[764px] flex flex-col rounded-t-[7px] px-[4px] pb-[4px] bg-[#0a52e0]">
          <Title icon={I.query(16)} title="kreuzprodukt : Auswahlabfrage" active />
          <div className="flex-1 min-h-0 flex flex-col border-t-2 border-l border-t-[#8a8778] border-l-[#8a8778] border-b border-b-white">
            <div className={`flex-1 min-h-0 overflow-hidden ${DESK}`}>
              <div className="grid grid-cols-[19px_94px_94px_94px_94px_94px] w-[489px]">
                <RowHead />
                {["TABLE01.ZAHL", "TABLE02.ZAHL", "TABLE03.ZAHL", "TABLE04.ZAHL", "TABLE05.ZAHL"].map((c) => (
                  <ColHead key={c} clip>{c}</ColHead>
                ))}
                {rows.map(([a, b], i) => (
                  <React.Fragment key={i}>
                    <RowHead mark={i === 0 ? "cur" : undefined} />
                    <Cell grid hl={i === 0}>{a}</Cell>
                    <Cell grid>{b}</Cell>
                    <Cell grid>1</Cell>
                    <Cell grid>1</Cell>
                    <Cell grid>1</Cell>
                  </React.Fragment>
                ))}
              </div>
            </div>
            <Nav full value />
          </div>
        </div>
      </div>

      {/* MDI scrollbar */}
      <div className="h-[19px] shrink-0 flex items-center px-[3px] bg-[#f6f4ec]">
        <Scroll dir="left" />
        <div className="w-[767px] h-[16px] ml-[1px] bg-[#c3d4fb] border-y border-white" />
        <div className="w-[16px] h-[16px] bg-[#c3d4fb] border-y border-white flex items-center justify-center">
          <svg width="8" height="8" viewBox="0 0 8 8"><path d="M1.5 1v6M3.5 1v6M5.5 1v6" stroke="#8a9fd0" /></svg>
        </div>
        <div className="flex-1 h-[16px] bg-[#c3d4fb] border-y border-r border-white rounded-r-[2px]" />
        <div className="w-[9px]" />
        <Scroll dir="right" />
      </div>

      {/* status bar */}
      <div className="h-[20px] shrink-0 flex items-center">
        <div className="w-[1344px] ml-[8px] h-[17px] border border-[#f6f4ea] pl-[2px] text-[11px] leading-[16px] shrink-0">Datenblattansicht</div>
        <div className="w-[18px] shrink-0" />
        <StatusP w="w-[27px]" />
        <div className="w-[4px]" />
        <StatusP w="w-[26px]" />
        <div className="w-[3px]" />
        <StatusP w="w-[27px]" />
        <div className="w-[3px]" />
        <StatusP w="w-[37px]" />
        <div className="w-[3px]" />
        <StatusP w="w-[31px]" />
        <div className="w-[3px]" />
        <StatusP w="w-[17px]">NF</StatusP>
        <div className="w-[3px]" />
        <StatusP w="w-[17px]" />
        <div className="w-[3px]" />
        <StatusP w="w-[17px]" />
      </div>

      {/* taskbar */}
      <div className="h-[34px] shrink-0 flex items-stretch overflow-hidden bg-[linear-gradient(180deg,#1a56c4,#3a78e4_8%,#2b62dc_20%,#2458d8_70%,#1c44ac)] text-white">
        <div className="w-[98px] shrink-0 rounded-r-[10px] flex items-center pl-[8px] pt-[2px] gap-[5px] bg-[linear-gradient(180deg,#5aa45a,#3f8f3f_15%,#3a8a3a_70%,#2e6e2e)]">
          <svg width="22" height="22" viewBox="0 0 22 22" className="shrink-0">
            <path d="M2 5c3-2 5-2 8 0l-1.5 6c-3-1.5-5-1.5-8 0z" fill="#e8501c" />
            <path d="M11 5.5c3 2 5 2 8 0l-1.5 6c-3 1.5-5 1.5-8 0z" fill="#7cc040" />
            <path d="M0.5 12c3-1.5 5-1.5 8 0L7 18c-3-1.5-5-1.5-8 0z" fill="#3a8ae8" />
            <path d="M9.5 12.5c3 1.5 5 1.5 8 0L16 18.5c-3 1.5-5 1.5-8 0z" fill="#f4c020" />
          </svg>
          <span className="font-bold italic text-[17.5px] [text-shadow:1px_1px_1px_#123]">Start</span>
        </div>
        <Grip />
        <div className="flex items-center pt-[3px]">
          {Q.map((ic, i) => (
            <div key={i} className="w-[23.05px] flex justify-center shrink-0">{ic}</div>
          ))}
        </div>
        <Grip w="w-[19px]" />
        <div className="flex items-center pt-[3px] text-[10.8px] gap-[1px]">
          <div className="w-[158px] h-[24px] rounded-[3px] bg-[#3c80f0] flex items-center pl-[9px] gap-[3px] shrink-0">
            {I.folder(16)}
            <b className="text-[#f6bc6c]">4</b>
            <span className="flex-1 whitespace-nowrap">Windows Explorer</span>
            <div className="w-0 h-0 mr-[5px] border-x-[3px] border-t-[3px] border-x-transparent border-t-white" />
          </div>
          <div className="w-[158px] h-[24px] rounded-[3px] bg-[#3c80f0] flex items-center pl-[9px] gap-[3px] shrink-0">
            {I.frontpage(16)}
            <span className="whitespace-nowrap">Microsoft FrontPage -…</span>
          </div>
          <div className="w-[160px] h-[25px] rounded-[3px] bg-[#1c50b4] border border-[#1a3e94] flex items-center pl-[10px] gap-[3px] shrink-0">
            {I.access(16)}
            <b className="text-[#f6bc6c]">8</b>
            <span className="flex-1 whitespace-nowrap">Microsoft Access</span>
            <div className="w-0 h-0 mr-[5px] border-x-[3px] border-t-[3px] border-x-transparent border-t-white" />
          </div>
        </div>
        <div className="flex-1" />
        <Grip />
        <div className="w-[30px] pr-[10px] pt-[3px] flex items-center justify-center text-[11.5px] shrink-0">DE</div>
        <div className="w-[182px] shrink-0 flex items-center pt-[3px] pr-[5px] bg-[linear-gradient(180deg,#0d8fe8,#1498ee_15%,#0f86e4_75%,#0d6fcc)] border-l border-[#1a3e94]">
          <div className="w-[19px] h-[19px] -ml-[10px] rounded-full bg-[#2a6ce0] border border-white flex items-center justify-center shrink-0">
            <svg width="9" height="9" viewBox="0 0 9 9"><path d="M6 1L2.5 4.5 6 8" fill="none" stroke="#fff" strokeWidth="2" /></svg>
          </div>
          {Tray.map((ic, i) => (
            <div key={i} className="w-[18px] flex justify-center shrink-0">{ic}</div>
          ))}
          <div className="flex-1 text-center text-[12px]">06:43</div>
        </div>
      </div>
    </div>
  );
}
